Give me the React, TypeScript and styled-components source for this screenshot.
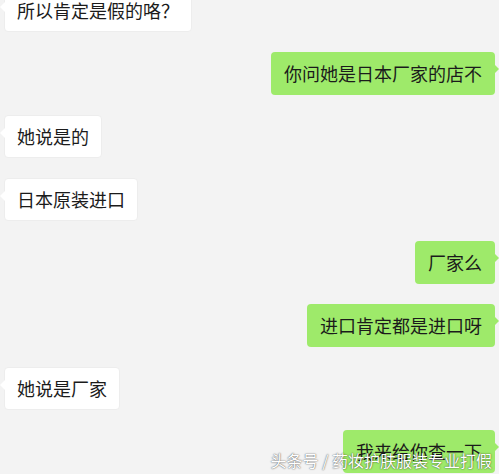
import React from 'react';
import styled, { createGlobalStyle, css } from 'styled-components';

const GlobalStyle = createGlobalStyle`
  html, body {
    margin: 0;
    padding: 0;
    background: #f3f3f3;
    overflow: hidden;
  }
  body {
    font-family: "Noto Sans CJK SC", "Noto Sans", sans-serif;
  }
`;

type Side = 'left' | 'right';

const messages: { side: Side; text: string }[] = [
  { side: 'left', text: '所以肯定是假的咯？' },
  { side: 'right', text: '你问她是日本厂家的店不' },
  { side: 'left', text: '她说是的' },
  { side: 'left', text: '日本原装进口' },
  { side: 'right', text: '厂家么' },
  { side: 'right', text: '进口肯定都是进口呀' },
  { side: 'left', text: '她说是厂家' },
  { side: 'right', text: '我来给你查一下' },
];

const Screen = styled.div`
  position: relative;
  width: 499px;
  height: 474px;
  overflow: hidden;
  background: #f3f3f3;
`;

const Thread = styled.div`
  display: flex;
  flex-direction: column;
  gap: 20px;
  margin-top: -11px;
  padding: 0 4px;
`;

const Row = styled.div<{ $side: Side }>`
  display: flex;
  justify-content: ${(p) => (p.$side === 'left' ? 'flex-start' : 'flex-end')};
`;

const Bubble = styled.div<{ $side: Side }>`
  position: relative;
  height: 43px;
  box-sizing: border-box;
  padding: 0 13px;
  display: flex;
  align-items: center;
  font-size: 18px;
  line-height: 25px;
  color: #1b1b1b;
  border-radius: 4px;
  white-space: nowrap;
  ${(p) =>
    p.$side === 'left'
      ? css`
          background: #ffffff;
          border: 1px solid #ededed;
          padding: 0 12px;
          &::before {
            content: '';
            position: absolute;
            left: -5px;
            top: 12px;
            border-style: solid;
            border-width: 5px 5px 5px 0;
            border-color: transparent #ffffff transparent transparent;
          }
        `
      : css`
          background: #9eea6a;
          &::after {
            content: '';
            position: absolute;
            right: -4px;
            top: 12px;
            border-style: solid;
            border-width: 5px 0 5px 5px;
            border-color: transparent transparent transparent #9eea6a;
          }
        `}
`;

const Watermark = styled.div`
  position: absolute;
  right: 7px;
  bottom: 4px;
  font-size: 16px;
  line-height: 20px;
  color: #ffffff;
  white-space: nowrap;
  text-shadow: 0 0 1px rgba(0, 0, 0, 0.55), 0 0 2px rgba(0, 0, 0, 0.45);
`;

export default function App() {
  return (
    <Screen>
      <GlobalStyle />
      <Thread>
        {messages.map((m, i) => (
          <Row key={i} $side={m.side}>
            <Bubble $side={m.side}>{m.text}</Bubble>
          </Row>
        ))}
      </Thread>
      <Watermark>头条号 / 药妆护肤服装专业打假</Watermark>
    </Screen>
  );
}
